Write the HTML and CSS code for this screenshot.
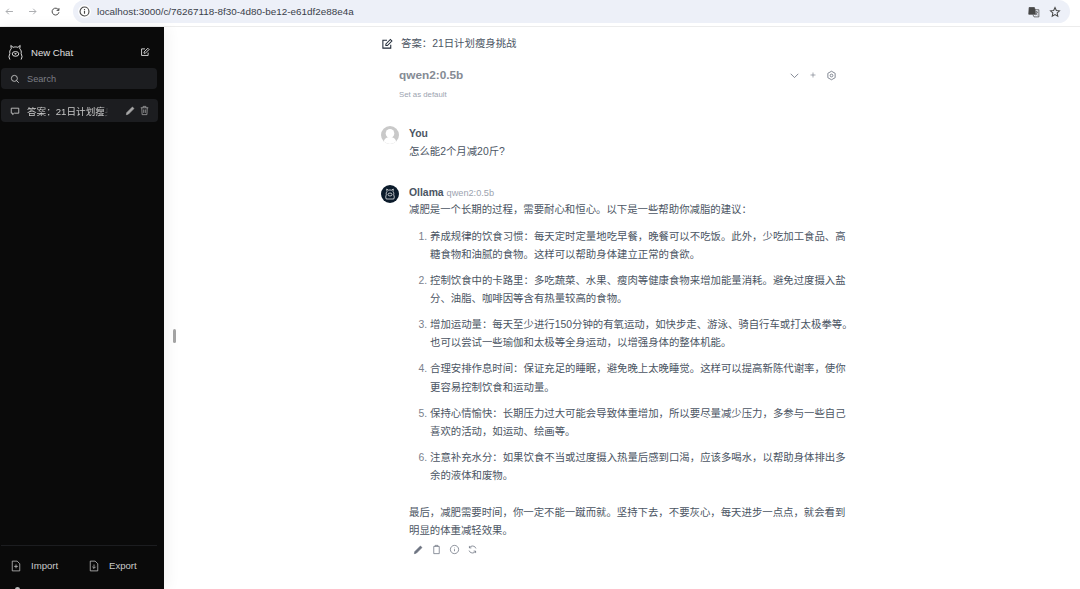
FILE: index.html
```html
<!DOCTYPE html>
<html lang="en">

<head>
    <meta charset="UTF-8">
    <meta name="viewport" content="width=device-width, initial-scale=1.0">
    <title>答案：21日计划瘦身挑战</title>
    <link rel="stylesheet" href="styles.css">
</head>

<body>

    <!-- Browser bar -->
    <header class="browser-bar">
        <svg class="nav-icon dim" viewBox="0 0 16 16"><path d="M13 8H3M7 4 3 8l4 4" /></svg>
        <svg class="nav-icon dim" viewBox="0 0 16 16"><path d="M3 8h10M9 4l4 4-4 4" /></svg>
        <svg class="nav-icon" viewBox="0 0 16 16"><path d="M12.6 6A5 5 0 1 0 13 9M13 3v3.4H9.600" /></svg>
        <div class="address">
            <span class="site-info">
                <svg viewBox="0 0 16 16"><circle cx="8" cy="8" r="5.500" /><path d="M8 7.200v3.600M8 5v1.200" /></svg>
            </span>
            <span class="url">localhost:3000/c/76267118-8f30-4d80-be12-e61df2e88e4a</span>
            <span class="address-right">
                <svg class="translate" viewBox="0 0 16 16">
                    <path class="fill" d="M1.500 2h7l1 3v6h-8.500z" />
                    <path d="M6.500 5h8v9.500h-6.500l-1.500-3M9.500 8h3.500M11.200 7v1M12.500 8c-.5 2-1.500 3-3 4M10 9.500c.7 1.200 1.500 2 2.700 2.500" />
                </svg>
                <svg class="star" viewBox="0 0 16 16"><path d="m8 2 1.800 3.900 4.200.5-3.100 2.900.8 4.200L8 11.400l-3.700 2.100.8-4.200L2 6.400l4.200-.5z" /></svg>
            </span>
        </div>
    </header>

    <div class="app">

        <!-- Sidebar -->
        <aside class="sidebar">
            <div class="new-chat">
                <svg class="logo" viewBox="0 0 16 18">
                    <path d="M3.500 5 3 1.500l2.500 2c1.500-.6 3.500-.6 5 0l2.500-2L12.500 5c1.500 1.500 2 3 1.500 5l1 3.500-1 3M2 16.500l-1-3L2 10C1.500 8 2 6.500 3.500 5" />
                    <ellipse cx="8" cy="10.500" rx="3.500" ry="2.500" />
                    <path d="M7.200 10.200h1.600L8 11z" />
                </svg>
                <span class="new-chat-label">New Chat</span>
                <svg class="compose" viewBox="0 0 16 16">
                    <path d="M13 9v4.500H2.500V3H8" />
                    <path d="m6.500 8 6-6 2 2-6 6h-2z" />
                </svg>
            </div>

            <div class="search">
                <svg viewBox="0 0 16 16"><circle cx="7" cy="7" r="4.800" /><path d="m10.500 10.500 3.500 3.500" /></svg>
                <span>Search</span>
            </div>

            <div class="chat-item">
                <svg class="bubble" viewBox="0 0 16 16"><path d="M2 3.500h12v8H7l-2.800 2.200v-2.200H2z" /></svg>
                <span class="chat-title">答案：21日计划瘦身挑战</span>
                <svg class="chat-action" viewBox="0 0 16 16"><path class="fill" d="m2 14 .8-3 8-8 2.200 2.200-8 8z" /></svg>
                <svg class="chat-action" viewBox="0 0 16 16"><path d="M2.500 4h11M6 4V2h4v2M4 4l.5 10h7L12 4M6.800 6.500v5M9.200 6.500v5" /></svg>
            </div>

            <div class="sidebar-bottom">
                <div class="transfer">
                    <div class="transfer-item">
                        <svg viewBox="0 0 16 16"><path d="M3 1.500h6.500L13 5v9.500H3zM8 6v5M5.500 8.500h5" /></svg>
                        <span>Import</span>
                    </div>
                    <div class="transfer-item">
                        <svg viewBox="0 0 16 16"><path d="M3 1.500h6.500L13 5v9.500H3zM8 6v5M5.800 9 8 11.200 10.200 9" /></svg>
                        <span>Export</span>
                    </div>
                </div>
                <div class="user-dot"></div>
            </div>
        </aside>

        <div class="drag-handle"></div>

        <!-- Chat -->
        <main class="chat">
            <div class="chat-head">
                <svg viewBox="0 0 16 16">
                    <path d="M13 9v4.500H2.500V3H8" />
                    <path d="m6.500 8 6-6 2 2-6 6h-2z" />
                </svg>
                <span>答案：21日计划瘦身挑战</span>
            </div>

            <div class="model-row">
                <div class="model-name">qwen2:0.5b</div>
                <div class="model-tools">
                    <svg viewBox="0 0 16 16"><path d="m2.500 5.500 5.500 5.500 5.500-5.500" /></svg>
                    <svg class="small" viewBox="0 0 16 16"><path d="M8 3v10M3 8h10" /></svg>
                    <svg viewBox="0 0 16 16"><circle cx="8" cy="8" r="2" /><path d="m8 1.800 5.300 3v6.400L8 14.200l-5.300-3V4.800z" /></svg>
                </div>
            </div>
            <div class="set-default">Set as default</div>

            <section class="message user-message">
                <svg class="avatar" viewBox="0 0 18 18">
                    <circle cx="9" cy="9" r="9" fill="#c9c9c9" />
                    <circle cx="9" cy="7.400" r="4.300" fill="#fff" />
                    <path d="M2.800 15.500c1-3.500 3.500-4.500 6.200-4.500s5.200 1 6.200 4.500A9 9 0 0 1 9 18a9 9 0 0 1-6.200-2.500z" fill="#fff" />
                </svg>
                <div class="message-body">
                    <div class="sender">You</div>
                    <p class="question">怎么能2个月减20斤?</p>
                </div>
            </section>

            <section class="message reply">
                <svg class="avatar" viewBox="0 0 18 18">
                    <circle cx="9" cy="9" r="9" fill="#0b1b2b" />
                    <path class="ollama-mark" d="M6 6.500 5.700 4l1.700 1.200c1-.3 2.200-.3 3.200 0L12.300 4 12 6.500c.8 1 1 2 .7 3.200l.6 2.300-.5 2H5.200l-.5-2 .6-2.300C5 8.500 5.200 7.500 6 6.500z" />
                    <ellipse class="ollama-mark" cx="9" cy="9.500" rx="2" ry="1.500" />
                </svg>
                <div class="message-body">
                    <div class="sender">Ollama <span class="sender-model">qwen2:0.5b</span></div>
                    <p class="intro">减肥是一个长期的过程，需要耐心和恒心。以下是一些帮助你减脂的建议：</p>
                    <ol class="advice">
                        <li>养成规律的饮食习惯：每天定时定量地吃早餐，晚餐可以不吃饭。此外，少吃加工食品、高糖食物和油腻的食物。这样可以帮助身体建立正常的食欲。</li>
                        <li>控制饮食中的卡路里：多吃蔬菜、水果、瘦肉等健康食物来增加能量消耗。避免过度摄入盐分、油脂、咖啡因等含有热量较高的食物。</li>
                        <li>增加运动量：每天至少进行150分钟的有氧运动，如快步走、游泳、骑自行车或打太极拳等。也可以尝试一些瑜伽和太极等全身运动，以增强身体的整体机能。</li>
                        <li>合理安排作息时间：保证充足的睡眠，避免晚上太晚睡觉。这样可以提高新陈代谢率，使你更容易控制饮食和运动量。</li>
                        <li>保持心情愉快：长期压力过大可能会导致体重增加，所以要尽量减少压力，多参与一些自己喜欢的活动，如运动、绘画等。</li>
                        <li>注意补充水分：如果饮食不当或过度摄入热量后感到口渴，应该多喝水，以帮助身体排出多余的液体和废物。</li>
                    </ol>
                    <p class="closing">最后，减肥需要时间，你一定不能一蹴而就。坚持下去，不要灰心，每天进步一点点，就会看到明显的体重减轻效果。</p>
                    <div class="reply-tools">
                        <svg viewBox="0 0 16 16"><path class="fill" d="m2 14 .8-3 8-8 2.200 2.200-8 8z" /></svg>
                        <svg viewBox="0 0 16 16"><path d="M4 3.500h8V14H4zM6 3.500V2h4v1.500" /></svg>
                        <svg viewBox="0 0 16 16"><circle cx="8" cy="8" r="6" /><path d="M8 7.500v3M8 5.300v.8" /></svg>
                        <svg viewBox="0 0 16 16"><path d="M13 6.500A5.200 5.200 0 0 0 3.500 5.500M3 9.500a5.200 5.200 0 0 0 9.500 1M3.500 2.800v2.900h2.900M12.500 13.200v-2.900H9.600" /></svg>
                    </div>
                </div>
            </section>
        </main>
    </div>

</body>

</html>
```

FILE: styles.css
```css
* {
    box-sizing: border-box;
}

body {
    margin: 0;
    height: 589px;
    overflow: hidden;
    display: flex;
    flex-direction: column;
    background-color: white;
    font-family: "Liberation Sans", "Noto Sans CJK SC", sans-serif;
}

svg {
    display: block;
    fill: none;
    stroke: currentColor;
    stroke-width: 1.400;
    flex-shrink: 0;
}

svg .fill {
    fill: currentColor;
}

p {
    margin: 0;
}

/* Browser bar */
.browser-bar {
    height: 27px;
    flex-shrink: 0;
    display: flex;
    align-items: center;
    padding: 0 10px 3px 4px;
    color: #474747;
    border-bottom: 1px solid #ececec;
}

.nav-icon {
    width: 11px;
    height: 11px;
    margin-right: 12px;
}

.nav-icon.dim {
    color: #a9abae;
}

.address {
    flex: 1;
    height: 23px;
    display: flex;
    align-items: center;
    padding: 0 0 0 5px;
    border-radius: 12px;
    background-color: #edf0f8;
}

.site-info {
    width: 13px;
    height: 13px;
    margin-right: 6px;
    border-radius: 50%;
    background-color: white;
}

.site-info svg {
    width: 13px;
    height: 13px;
}

.url {
    font-size: 9.900px;
    color: #3a3f4a;
}

.address-right {
    margin-left: auto;
    margin-right: 9px;
    display: flex;
    align-items: center;
    gap: 9px;
}

.translate {
    width: 12px;
    height: 12px;
    stroke-width: 1;
}

.star {
    width: 12px;
    height: 12px;
}

.app {
    flex: 1;
    display: flex;
    min-height: 0;
    position: relative;
}

/* Sidebar */
.sidebar {
    width: 164px;
    flex-shrink: 0;
    display: flex;
    flex-direction: column;
    background-color: #0a0a0a;
    color: #e5e5e5;
    box-shadow: 3px 0 14px rgba(0, 0, 0, 0.06);
    padding: 15px 0 0 1px;
    overflow: hidden;
}

.new-chat {
    height: 20px;
    display: flex;
    align-items: center;
    padding: 0 14px 0 7px;
}

.logo {
    width: 15px;
    height: 17px;
    stroke-width: 1;
}

.new-chat-label {
    margin-left: 8px;
    font-size: 9.600px;
    color: #e0e0e0;
}

.compose {
    width: 10px;
    height: 10px;
    margin-left: auto;
}

.search {
    height: 21px;
    width: 156px;
    margin-top: 6px;
    display: flex;
    align-items: center;
    gap: 7px;
    padding-left: 9px;
    border-radius: 4px;
    background-color: #1c1d20;
    font-size: 9.200px;
    color: #7d7f86;
}

.search svg {
    width: 10px;
    height: 10px;
    color: #c8c8c8;
}

.chat-item {
    height: 23px;
    width: 157px;
    margin-top: 10px;
    display: flex;
    align-items: center;
    padding-left: 9px;
    border-radius: 4px;
    background-color: #1c1d20;
    font-size: 9.600px;
    color: #c9c9c9;
}

.bubble {
    width: 10px;
    height: 10px;
    margin-right: 7px;
}

.chat-title {
    width: 81px;
    flex-shrink: 0;
    margin-right: 17px;
    overflow: hidden;
    white-space: nowrap;
    -webkit-mask-image: linear-gradient(to right, black 94%, transparent);
    mask-image: linear-gradient(to right, black 94%, transparent);
}

.chat-action {
    width: 11px;
    height: 11px;
    margin-right: 3px;
    stroke-width: 1.100;
    color: #a8a8a8;
}

.sidebar-bottom {
    margin-top: auto;
}

.transfer {
    height: 42px;
    width: 156px;
    display: flex;
    align-items: center;
    padding: 0 0 2px 9px;
    border-top: 1px solid #1c1d20;
    color: #c9c9c9;
    font-size: 9.600px;
}

.transfer-item {
    width: 78px;
    flex-shrink: 0;
    display: flex;
    align-items: center;
    gap: 9px;
}

.transfer-item svg {
    width: 12px;
    height: 12px;
    stroke-width: 1;
}

.user-dot {
    width: 5px;
    height: 5px;
    margin: 0 0 -3px 14px;
    border-radius: 50%;
    background-color: #bdbdbd;
}

.drag-handle {
    position: absolute;
    left: 173px;
    top: 302px;
    width: 2.500px;
    height: 14px;
    border-radius: 2px;
    background-color: #a3a3a3;
}

/* Chat */
.chat {
    flex: 1;
    padding: 9px 0 0 217px;
    color: #4b5563;
    font-size: 10.400px;
    line-height: 18.300px;
}

.chat-head {
    height: 16px;
    display: flex;
    align-items: center;
    gap: 8px;
    color: #4b5563;
    font-size: 10.400px;
}

.chat-head svg {
    width: 12px;
    height: 12px;
    color: #1f2937;
}

.model-row {
    width: 456px;
    margin-top: 15px;
    padding-left: 18px;
    display: flex;
    align-items: center;
    justify-content: space-between;
}

.model-name {
    font-size: 11.800px;
    font-weight: bold;
    line-height: 16px;
    color: #858b94;
}

.model-tools {
    display: flex;
    align-items: center;
    gap: 9px;
    color: #6b7280;
}

.model-tools svg {
    width: 11px;
    height: 11px;
    stroke-width: 1.200;
}

.model-tools svg.small {
    width: 8px;
    height: 8px;
}

.set-default {
    margin: 6px 0 0 18px;
    font-size: 7.800px;
    line-height: 12px;
    color: #9ca3af;
}

.message {
    display: flex;
    gap: 10px;
}

.user-message {
    margin-top: 25px;
}

.reply {
    margin-top: 24px;
}

.avatar {
    width: 18px;
    height: 18px;
    stroke: none;
}

.ollama-mark {
    stroke: white;
    stroke-width: 0.700;
}

.message-body {
    width: 445px;
}

.sender {
    font-size: 10.400px;
    line-height: 16px;
    font-weight: bold;
    color: #4b5563;
}

.sender-model {
    font-size: 9.200px;
    font-weight: normal;
    color: #9ca3af;
}

.question {
    margin-top: 1px;
}

.intro {
    margin-top: 0;
}

.advice {
    margin: 8px 0 0 0;
    padding-left: 21px;
}

.advice li {
    margin-bottom: 7.700px;
}

.advice li::marker {
    content: counter(list-item) ".\00a0";
    color: #7b818c;
}

.closing {
    margin-top: 18.500px;
}

.reply-tools {
    margin-top: 3px;
    padding-left: 4px;
    display: flex;
    gap: 7px;
    color: #6b7280;
}

.reply-tools svg {
    width: 11px;
    height: 11px;
    stroke-width: 1.100;
}
```
